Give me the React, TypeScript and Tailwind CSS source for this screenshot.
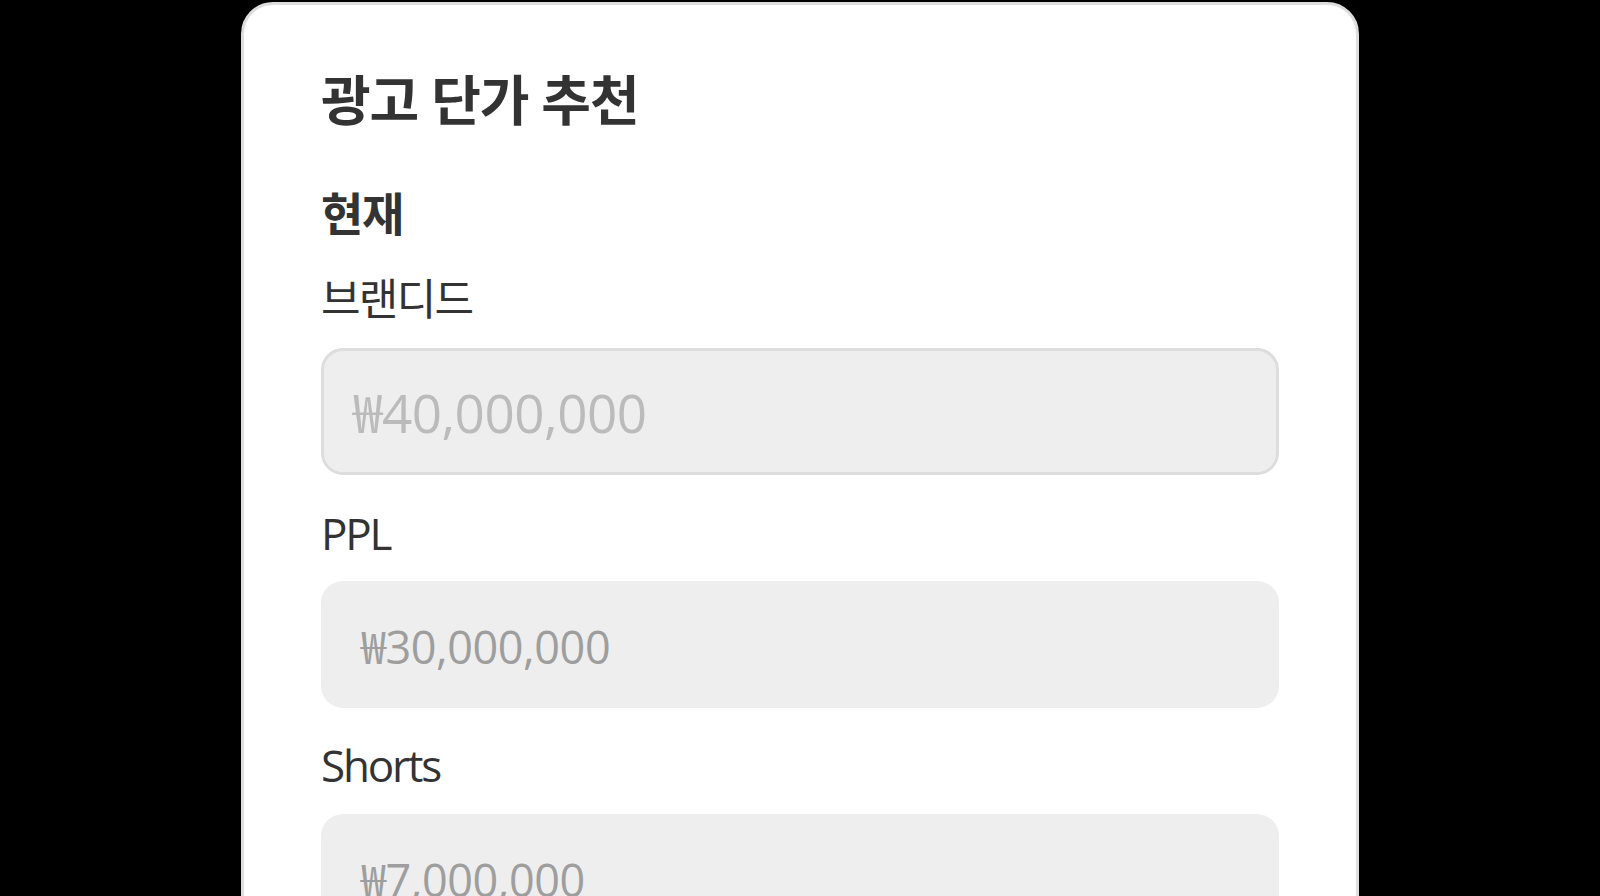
import React from "react";

const font = { fontFamily: '"Open Sans", "Noto Sans CJK KR", sans-serif' };

function Field({ value, bordered, textClass }: { value: string; bordered?: boolean; textClass: string }) {
  return (
    <div
      className={
        "h-[127px] w-full rounded-[22px] bg-[#eeeeee] flex items-center " +
        (bordered ? "border-[3px] border-[#dddddd] pl-[29px]" : "pl-[40px]")
      }
    >
      <span className={textClass}>{value}</span>
    </div>
  );
}

export default function App() {
  return (
    <div className="w-[1600px] h-[896px] bg-black overflow-hidden" style={font}>
      <div className="mx-auto mt-[2px] w-[1118px] h-[960px] rounded-[32px] border-[3px] border-[#dddddd] bg-white px-[77px] pt-[68px]">
        <h1 className="text-[54px] leading-[54px] font-bold text-[#333333] tracking-[-0.02em]">광고 단가 추천</h1>
        <h2 className="mt-[63px] text-[46px] leading-[46px] font-bold text-[#333333] tracking-[-0.03em]">현재</h2>
        <div className="mt-[42px] text-[43px] leading-[42px] text-[#333333] tracking-[-0.04em]">브랜디드</div>
        <div className="mt-[28px]">
          <Field bordered value="₩40,000,000" textClass="text-[53px] leading-[53px] text-[#bbbbbb] tracking-[-0.01em] translate-y-[1px]" />
        </div>
        <div className="mt-[34px] text-[44px] leading-[48px] text-[#333333] tracking-[-0.05em]">PPL</div>
        <div className="mt-[24px]">
          <Field value="₩30,000,000" textClass="text-[45px] leading-[45px] text-[#9e9e9e] tracking-[-0.01em] translate-y-[2px]" />
        </div>
        <div className="mt-[33px] text-[44px] leading-[48px] text-[#333333] tracking-[-0.05em]">Shorts</div>
        <div className="mt-[25px]">
          <Field value="₩7,000,000" textClass="text-[45px] leading-[45px] text-[#9e9e9e] tracking-[-0.01em] translate-y-[2px]" />
        </div>
      </div>
    </div>
  );
}
